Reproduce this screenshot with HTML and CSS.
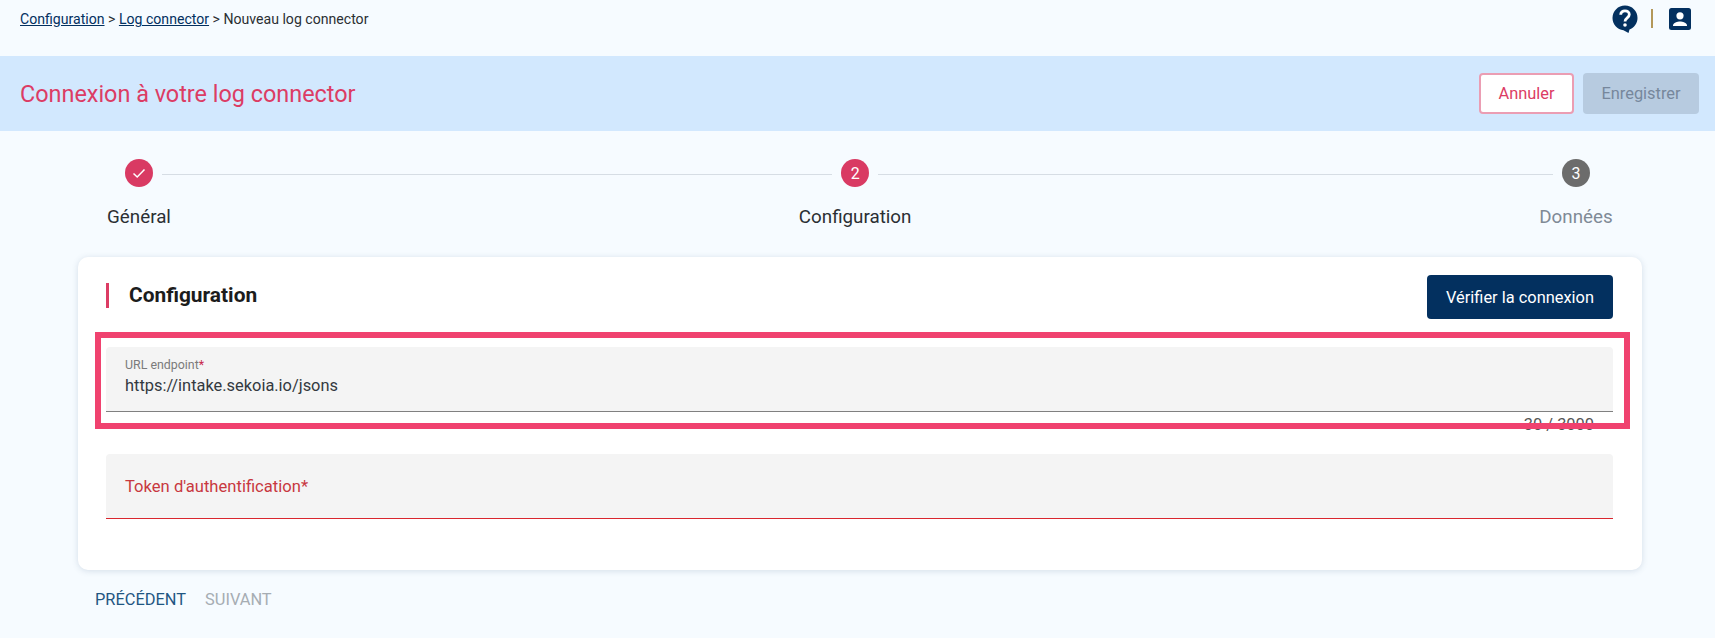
FILE: index.html
```html
<!DOCTYPE html>
<html lang="fr">
<head>
  <meta charset="UTF-8">
  <meta name="viewport" content="width=device-width, initial-scale=1.0">
  <title>Connexion à votre log connector</title>
  <link rel="stylesheet" href="styles.css">
</head>
<body>
  <!-- Top bar -->
  <header class="topbar">
    <nav class="breadcrumb">
      <a href="#">Configuration</a> &gt; <a href="#">Log connector</a> &gt; Nouveau log connector
    </nav>
    <div class="topbar-icons">
      <svg class="icon-help" viewBox="0 0 26 28" width="26" height="28">
        <path fill="#03305f" d="M13 0.5C6 0.5 0.5 6 0.5 13c0 6.4 4.8 11.6 11 12.3L16.500 28l1-3.400C22.200 22.800 25.500 18.300 25.500 13 25.500 6 20 0.500 13 0.500z"/>
        <path fill="none" stroke="#ffffff" stroke-width="2.800" d="M8.700 9.800c0-2.400 1.900-4 4.300-4s4.300 1.500 4.300 3.800c0 3.300-4.300 3.300-4.300 6.900"/>
        <circle fill="#ffffff" cx="13" cy="20" r="1.800"/>
      </svg>
      <span class="icon-sep"></span>
      <svg class="icon-user" viewBox="0 0 22 22" width="22" height="22">
        <rect fill="#03305f" width="22" height="22" rx="2.500"/>
        <circle fill="#ffffff" cx="11" cy="7.800" r="3.600"/>
        <path fill="#ffffff" d="M4 17.500c0-2.700 4.500-4 7-4s7 1.300 7 4V18H4z"/>
      </svg>
    </div>
  </header>

  <!-- Title banner -->
  <div class="banner">
    <h1>Connexion à votre log connector</h1>
    <div class="banner-actions">
      <button class="btn btn-cancel">Annuler</button>
      <button class="btn btn-save">Enregistrer</button>
    </div>
  </div>

  <!-- Stepper -->
  <div class="stepper">
    <div class="step">
      <span class="step-circle">
        <svg viewBox="0 0 16 16" width="16" height="16">
          <path fill="none" stroke="#ffffff" stroke-width="1.500" d="M2.500 8.500l3.700 3.500 7.300-7.500"/>
        </svg>
      </span>
      <span class="step-label">Général</span>
    </div>
    <div class="step-line step-line-first"></div>
    <div class="step">
      <span class="step-circle">2</span>
      <span class="step-label">Configuration</span>
    </div>
    <div class="step-line"></div>
    <div class="step step-todo">
      <span class="step-circle">3</span>
      <span class="step-label">Données</span>
    </div>
  </div>

  <!-- Form card -->
  <section class="card">
    <div class="card-header">
      <h2>Configuration</h2>
      <button class="btn btn-check">Vérifier la connexion</button>
    </div>

    <div class="field">
      <div class="field-box">
        <label class="field-label">URL endpoint<span class="required">*</span></label>
        <div class="field-value">https://intake.sekoia.io/jsons</div>
      </div>
      <div class="field-hint">30 / 3000</div>
      <div class="highlight"></div>
    </div>

    <div class="field field-error">
      <div class="field-box">
        <label class="field-placeholder">Token d'authentification*</label>
      </div>
    </div>
  </section>

  <!-- Step navigation -->
  <div class="step-nav">
    <button class="nav-btn">PRÉCÉDENT</button>
    <button class="nav-btn nav-disabled">SUIVANT</button>
  </div>
</body>
</html>
```

FILE: styles.css
```css
body {
  margin: 0;
  padding: 0;
  height: 638px;
  overflow: hidden;
  background-color: #f6fbff;
  font-family: Roboto, Arial, sans-serif;
  color: #2b2f33;
}

.topbar {
  height: 56px;
  display: flex;
  justify-content: space-between;
  align-items: flex-start;
  padding: 0 24px 0 20px;
  box-sizing: border-box;
}

.breadcrumb {
  font-size: 14.1px;
  line-height: 16px;
  margin-top: 11px;
}

.breadcrumb a {
  color: #03305f;
  text-decoration: underline;
}

.topbar-icons {
  display: flex;
  align-items: flex-start;
  margin-top: 5px;
}

.icon-help {
  display: block;
}

.icon-sep {
  width: 2px;
  height: 19px;
  margin: 4px 16px 0 13px;
  background-color: #b3985a;
}

.icon-user {
  display: block;
  margin-top: 3px;
}

.banner {
  height: 75px;
  display: flex;
  justify-content: space-between;
  align-items: center;
  padding: 0 16px 0 20px;
  background-color: #d2e8fe;
}

.banner h1 {
  margin: 0;
  font-size: 23.4px;
  font-weight: 400;
  color: #dc3c64;
}

.banner-actions {
  display: flex;
  gap: 9px;
}

.btn {
  height: 41px;
  border-radius: 4px;
  font-family: inherit;
  font-size: 16.4px;
  cursor: pointer;
}

.btn-cancel {
  width: 95px;
  background-color: #ffffff;
  border: 2px solid #eb9db3;
  color: #dc3c64;
}

.btn-save {
  width: 116px;
  background-color: #b7cbe0;
  border: none;
  color: #76879c;
}

.stepper {
  display: flex;
  padding: 28px 125px 0;
  height: 126px;
  box-sizing: border-box;
}

.step {
  width: 28px;
  display: flex;
  flex-direction: column;
  align-items: center;
}

.step-circle {
  flex: none;
  width: 28px;
  height: 28px;
  border-radius: 50%;
  display: flex;
  justify-content: center;
  align-items: center;
  background-color: #d93a63;
  color: #ffffff;
  font-size: 16px;
}

.step-label {
  margin-top: 20px;
  font-size: 18.8px;
  line-height: 20px;
  white-space: nowrap;
}

.step-todo .step-circle {
  background-color: #6c6c6c;
}

.step-todo .step-label {
  color: #7f8a96;
}

.step-line {
  flex: 1;
  height: 1px;
  margin: 15px 9px 0;
  background-color: #d6dde4;
}

.step-line-first {
  flex: 0.993;
}

.card {
  width: 1564px;
  height: 313px;
  margin-left: 78px;
  padding: 18px 29px 0 28px;
  box-sizing: border-box;
  background-color: #ffffff;
  border-radius: 10px;
  box-shadow: 0 1px 6px rgba(60, 90, 130, 0.18);
}

.card-header {
  display: flex;
  justify-content: space-between;
  align-items: center;
  height: 44px;
}

.card-header h2 {
  margin: 0 0 3px;
  padding-left: 20px;
  border-left: 3px solid #dc3c64;
  font-size: 20.9px;
  line-height: 25px;
  font-weight: 700;
  color: #1c1c1c;
}

.btn-check {
  width: 186px;
  height: 44px;
  background-color: #03305f;
  border: none;
  color: #ffffff;
}

.field {
  position: relative;
  margin-top: 28px;
}

.field + .field {
  margin-top: 21px;
}

.field-box {
  height: 65px;
  padding: 0 19px;
  box-sizing: border-box;
  background-color: #f4f4f4;
  border-bottom: 1px solid #808080;
  border-radius: 4px 4px 0 0;
}

.field-label {
  display: block;
  padding-top: 11px;
  font-size: 12.4px;
  line-height: 14px;
  color: #7b7b7b;
}

.required {
  color: #c8284b;
}

.field-value {
  margin-top: 4px;
  font-size: 16.4px;
  line-height: 20px;
  color: #33393f;
}

.field-hint {
  margin-top: 5px;
  padding-right: 19px;
  text-align: right;
  font-size: 16.4px;
  line-height: 16px;
  color: #555555;
}

/* Annotation drawn over the screenshot */
.highlight {
  position: absolute;
  top: -15px;
  left: -11px;
  width: 1535px;
  height: 97px;
  box-sizing: border-box;
  border: 6px solid #f0426f;
}

.field-error .field-box {
  border-bottom-color: #d9262e;
}

.field-placeholder {
  display: block;
  padding-top: 23px;
  font-size: 16.6px;
  line-height: 20px;
  color: #c8383f;
}

.step-nav {
  display: flex;
  gap: 19px;
  margin: 21px 0 0 95px;
}

.nav-btn {
  padding: 0;
  border: none;
  background: none;
  font-family: inherit;
  font-size: 16.4px;
  line-height: 18px;
  color: #1f5682;
  cursor: pointer;
}

.nav-disabled {
  color: #a6adb3;
}
```
